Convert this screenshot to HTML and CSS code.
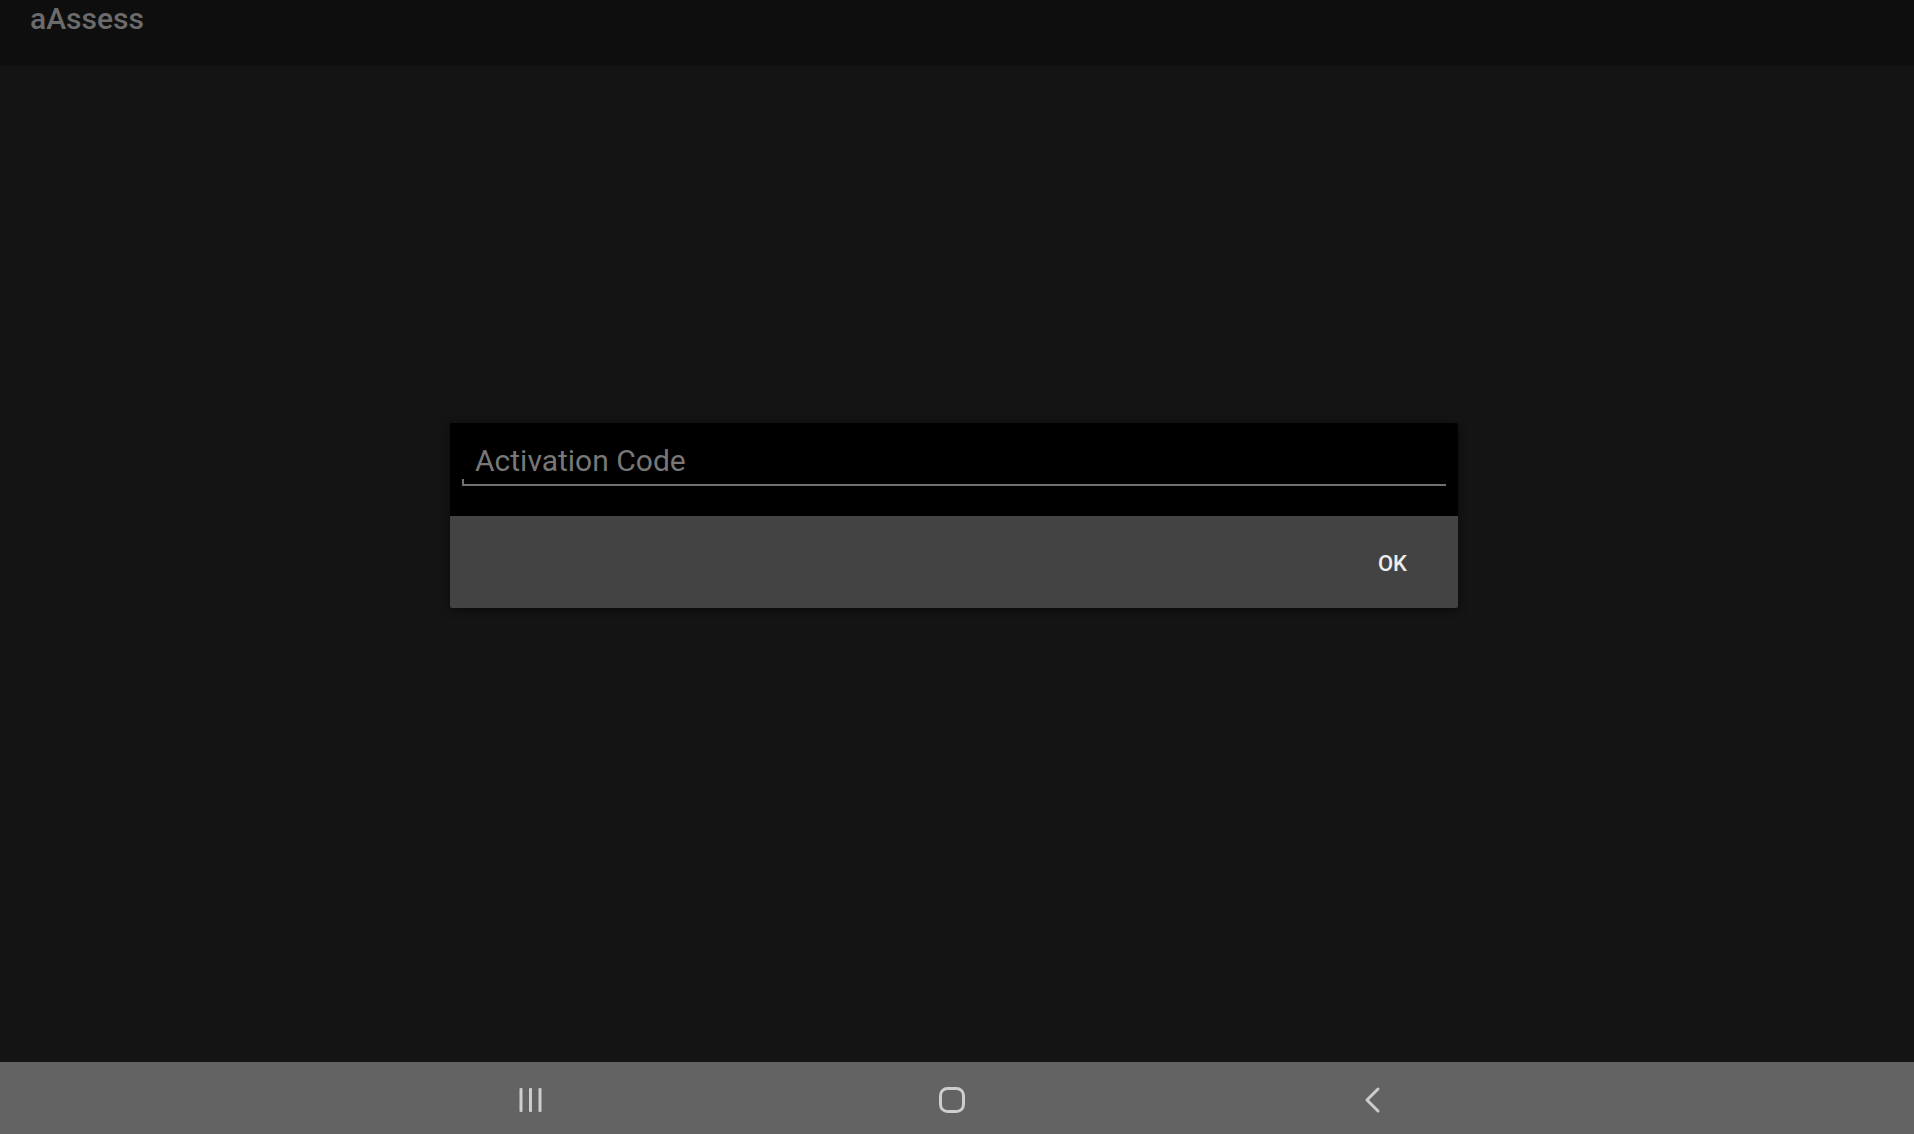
FILE: index.html
```html
<!DOCTYPE html>
<html>
<head>
<meta charset="utf-8">
<link rel="stylesheet" href="styles.css">
</head>
<body>
<div class="app">
  <header class="topbar"><span class="title">aAssess</span></header>
  <main class="content">
    <div class="dialog">
      <div class="dialog-body">
        <div class="field">
          <span class="placeholder">Activation Code</span>
        </div>
      </div>
      <div class="dialog-actions">
        <span class="btn-ok">OK</span>
      </div>
    </div>
  </main>
  <nav class="navbar">
    <svg class="nav-icon" viewBox="0 0 28 28" width="28" height="28">
      <rect x="3.5" y="2" width="3" height="24" rx="1" fill="#cdcdcd"/>
      <rect x="13" y="2" width="3" height="24" rx="1" fill="#cdcdcd"/>
      <rect x="22.5" y="2" width="3" height="24" rx="1" fill="#cdcdcd"/>
    </svg>
    <svg class="nav-icon" viewBox="0 0 28 28" width="28" height="28">
      <rect x="2.5" y="2.5" width="23" height="23" rx="7" fill="none" stroke="#cdcdcd" stroke-width="3"/>
    </svg>
    <svg class="nav-icon" viewBox="0 0 28 28" width="28" height="28">
      <path d="M18 3 L7 14 L18 25" fill="none" stroke="#cdcdcd" stroke-width="3" stroke-linecap="round" stroke-linejoin="round"/>
    </svg>
  </nav>
</div>
</body>
</html>
```

FILE: styles.css
```css
html, body {
  margin: 0;
  padding: 0;
  width: 1914px;
  height: 1134px;
  overflow: hidden;
  background: #141414;
  font-family: Roboto, "Liberation Sans", sans-serif;
}
.app {
  display: flex;
  flex-direction: column;
  height: 1134px;
}
.topbar {
  height: 66px;
  flex: 0 0 66px;
  background: #0e0e0e;
  box-sizing: border-box;
  padding-left: 30px;
}
.title {
  display: block;
  font-size: 30px;
  font-weight: 500;
  color: #6b6b6b;
  line-height: 30px;
  margin-top: 4px;
}
.content {
  flex: 1;
  display: flex;
  align-items: flex-start;
  padding-top: 357px;
  padding-left: 450px;
  box-sizing: border-box;
}
.dialog {
  width: 1008px;
  border-radius: 2px;
  overflow: hidden;
  box-shadow: 0 2px 8px rgba(0,0,0,0.5);
  display: flex;
  flex-direction: column;
}
.dialog-body {
  background: #000;
  height: 93px;
  box-sizing: border-box;
  padding: 0 12px 0 12px;
}
.field {
  height: 63px;
  box-sizing: border-box;
  border-bottom: 2px solid #6f6f6f;
  position: relative;
  padding-left: 13px;
  padding-top: 23px;
}
.field::before {
  content: "";
  position: absolute;
  left: 0;
  bottom: 0;
  width: 2px;
  height: 5px;
  background: #6f6f6f;
}
.placeholder {
  display: block;
  font-size: 30px;
  line-height: 30px;
  color: #777777;
}
.dialog-actions {
  background: #434343;
  height: 92px;
  display: flex;
  justify-content: flex-end;
  align-items: center;
  padding-right: 51px;
}
.btn-ok {
  font-size: 22px;
  font-weight: 500;
  color: #ececec;
  line-height: 22px;
  margin-top: 4px;
}
.navbar {
  height: 72px;
  flex: 0 0 72px;
  background: #636363;
  display: flex;
  align-items: center;
  padding-left: 516px;
  padding-top: 4px;
  gap: 394px;
  box-sizing: border-box;
}
.nav-icon {
  display: block;
}
```
